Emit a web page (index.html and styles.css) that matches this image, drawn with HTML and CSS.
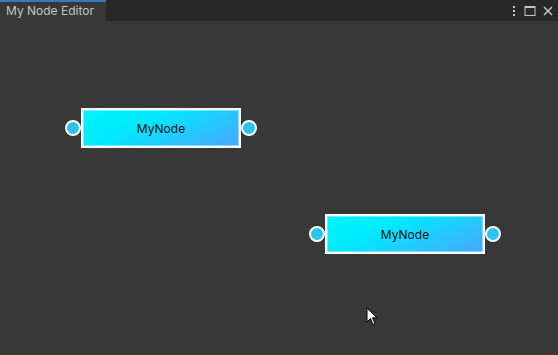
FILE: index.html
```html
<!DOCTYPE html>
<html>
<head>
<meta charset="utf-8">
<link rel="stylesheet" href="styles.css">
</head>
<body>
<div class="window">
  <div class="tabbar">
    <div class="tab">My Node Editor</div>
    <div class="spacer"></div>
    <div class="controls">
      <svg class="ico" width="6" height="12" viewBox="0 0 6 12"><rect x="2" y="1" width="2" height="2" fill="#c4c4c4"/><rect x="2" y="5" width="2" height="2" fill="#c4c4c4"/><rect x="2" y="9" width="2" height="2" fill="#c4c4c4"/></svg>
      <svg class="ico" width="12" height="12" viewBox="0 0 12 12"><rect x="1" y="1.5" width="10" height="9" fill="none" stroke="#c4c4c4" stroke-width="1"/><rect x="1" y="1" width="10" height="2" fill="#c4c4c4"/></svg>
      <svg class="ico" width="12" height="12" viewBox="0 0 12 12"><path d="M2 2 L10 10 M10 2 L2 10" stroke="#c4c4c4" stroke-width="1.5"/></svg>
    </div>
  </div>
  <div class="canvas">
    <div class="node n1">
      <span class="port left"></span>
      <div class="body">MyNode</div>
      <span class="port right"></span>
    </div>
    <div class="node n2">
      <span class="port left"></span>
      <div class="body">MyNode</div>
      <span class="port right"></span>
    </div>
    <svg class="cursor" width="14" height="20" viewBox="0 0 14 20"><path d="M1 1 L1 15 L4.5 11.5 L7 17.5 L9 16.5 L6.5 10.8 L11 10.8 Z" fill="#fff" stroke="#000" stroke-width="1"/></svg>
  </div>
</div>
</body>
</html>
```
FILE: styles.css
```css
* { box-sizing: border-box; }
html, body { margin: 0; padding: 0; width: 558px; height: 355px; overflow: hidden; background: #383838; }
body { font-family: "Inter", "Liberation Sans", sans-serif; }
.window { display: flex; flex-direction: column; width: 558px; height: 355px; }
.tabbar { height: 21px; background: #282828; display: flex; align-items: stretch; border-bottom: 1px solid #232323; }
.tab { width: 106px; background: #383838; border-top: 2px solid #3a79bb; color: #c4c4c4; font-size: 12px; padding-left: 6px; line-height: 18px; margin-bottom: -1px; }
.spacer { flex: 1; }
.controls { display: flex; align-items: center; gap: 6px; padding-right: 4px; padding-top: 1px; }
.ico { display: block; }
.ico:first-child { margin-right: 1px; }
.canvas { flex: 1; position: relative; background: #383838; }
.node { position: absolute; display: flex; align-items: center; }
.n1 { left: 65px; top: 87px; }
.n2 { left: 309px; top: 193px; }
.body { width: 160px; height: 40px; border: 2px solid #fff; background: linear-gradient(155deg, #00f4ff 0%, #00eaff 35%, #4aa6ff 100%); box-shadow: inset 0 0 0 1px rgba(190,250,255,0.55); color: #111; font-size: 12px; display: flex; align-items: center; justify-content: center; }
.port { width: 16px; height: 16px; border-radius: 50%; border: 2px solid #fff; background: #2ac4f4; }
.cursor { position: absolute; left: 366px; top: 286px; }
```
